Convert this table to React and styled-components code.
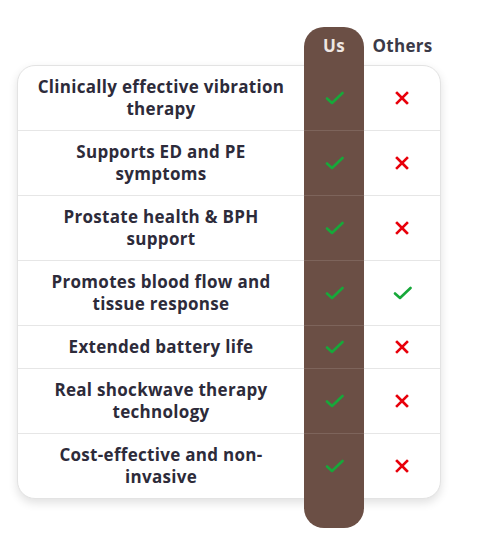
import React from 'react';
import styled, { createGlobalStyle } from 'styled-components';

const GlobalStyle = createGlobalStyle`
  html, body {
    margin: 0;
    padding: 0;
    background: #ffffff;
  }
  body {
    font-family: 'Open Sans', 'Liberation Sans', sans-serif;
  }
`;

const BROWN = '#6b4f45';

const Page = styled.div`
  padding: 27px 0 0 17px;
`;

const Table = styled.div`
  display: grid;
  grid-template-columns: 287px 60px 77px;
  grid-template-rows: 38px repeat(7, auto) 29px;
  width: 424px;
`;

const Card = styled.div`
  grid-row: 2 / 9;
  grid-column: 1 / 4;
  border: 1px solid #e3e3e3;
  border-radius: 18px;
  background: #fff;
  box-shadow: 0 4px 10px rgba(0, 0, 0, 0.12);
`;

const Highlight = styled.div`
  grid-row: 1 / 10;
  grid-column: 2;
  background: ${BROWN};
  border-radius: 20px;
  z-index: 1;
`;

const HeadCell = styled.div`
  grid-row: 1;
  grid-column: ${(p) => p.$col};
  z-index: 2;
  display: flex;
  align-items: center;
  justify-content: center;
  font-size: 17px;
  font-weight: 700;
  letter-spacing: 0.3px;
  color: ${(p) => (p.$us ? '#eee6e2' : '#3b3a48')};
  padding-bottom: 2px;
`;

const Label = styled.div`
  grid-row: ${(p) => p.$row};
  grid-column: 1;
  z-index: 2;
  display: flex;
  align-items: center;
  justify-content: center;
  text-align: center;
  padding: 10px 17px;
  margin-left: 1px;
  font-size: 17px;
  line-height: 22px;
  font-weight: 700;
  letter-spacing: 0.3px;
  color: #2d2b3a;
  border-bottom: 1px solid ${(p) => (p.$last ? 'transparent' : '#e6e6e6')};
  margin-top: ${(p) => (p.$first ? '1px' : '0')};
`;

const MarkCell = styled.div`
  grid-row: ${(p) => p.$row};
  grid-column: ${(p) => p.$col};
  z-index: 2;
  display: flex;
  align-items: center;
  justify-content: center;
  margin-right: ${(p) => (p.$col === 3 ? '1px' : '0')};
  border-bottom: 1px solid
    ${(p) => (p.$last ? 'transparent' : p.$col === 2 ? 'rgba(255,255,255,0.12)' : '#e6e6e6')};
  margin-top: ${(p) => (p.$first ? '1px' : '0')};
`;

const Check = () => (
  <svg width="19" height="14" viewBox="0 0 19 14">
    <path d="M2 7.5 L7 12 L17.5 2" fill="none" stroke="#17a83a" strokeWidth="2.6" strokeLinecap="round" strokeLinejoin="round" />
  </svg>
);

const Cross = () => (
  <svg width="14" height="14" viewBox="0 0 14 14">
    <path d="M2 2 L12 12 M12 2 L2 12" fill="none" stroke="#e8000b" strokeWidth="2.6" strokeLinecap="square" />
  </svg>
);

const rows = [
  ['Clinically effective vibration therapy', false],
  ['Supports ED and PE symptoms', false],
  ['Prostate health & BPH support', false],
  ['Promotes blood flow and tissue response', true],
  ['Extended battery life', false],
  ['Real shockwave therapy technology', false],
  ['Cost-effective and non-invasive', false],
];

export default function App() {
  return (
    <Page>
      <GlobalStyle />
      <Table>
        <Card />
        <Highlight />
        <HeadCell $col={2} $us>Us</HeadCell>
        <HeadCell $col={3}>Others</HeadCell>
        {rows.map(([label, others], i) => {
          const row = i + 2;
          const last = i === rows.length - 1;
          const first = i === 0;
          return (
            <React.Fragment key={label}>
              <Label $row={row} $last={last} $first={first}>{label}</Label>
              <MarkCell $row={row} $col={2} $last={last} $first={first}>
                <Check />
              </MarkCell>
              <MarkCell $row={row} $col={3} $last={last} $first={first}>
                {others ? <Check /> : <Cross />}
              </MarkCell>
            </React.Fragment>
          );
        })}
      </Table>
    </Page>
  );
}
